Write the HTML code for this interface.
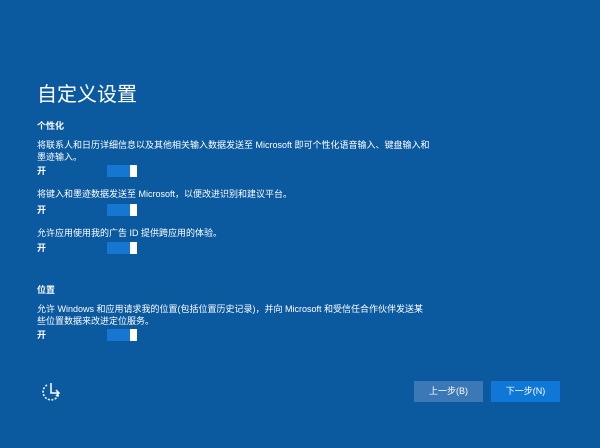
<!DOCTYPE html>
<html><head><meta charset="utf-8"><style>
body{margin:0;width:600px;height:448px;background:#0b5aa0;font-family:"Liberation Sans","Noto Sans CJK SC",sans-serif;color:#fff;position:relative;overflow:hidden}
.t{position:absolute;left:37px;font-size:9px;white-space:nowrap;line-height:12px}
.b{font-weight:bold}
.tg{position:absolute;left:107px;width:30px;height:12px;background:#1677d2}
.tg:after{content:"";position:absolute;right:0;top:0;width:7px;height:12px;background:#fff}
.btn{position:absolute;top:381px;width:69px;height:21px;font-size:9px;text-align:center;line-height:21px}
</style></head><body>
<div class="t" style="top:82px;font-size:20px;line-height:26px">自定义设置</div>
<div class="t b" style="top:120px">个性化</div>
<div class="t" style="top:139px">将联系人和日历详细信息以及其他相关输入数据发送至 Microsoft 即可个性化语音输入、键盘输入和</div>
<div class="t" style="top:151px">墨迹输入。</div>
<div class="t b" style="top:165px">开</div><div class="tg" style="top:165px"></div>
<div class="t" style="top:188px">将键入和墨迹数据发送至 Microsoft，以便改进识别和建议平台。</div>
<div class="t b" style="top:204px">开</div><div class="tg" style="top:204px"></div>
<div class="t" style="top:227px">允许应用使用我的广告 ID 提供跨应用的体验。</div>
<div class="t b" style="top:242px">开</div><div class="tg" style="top:242px"></div>
<div class="t b" style="top:284px">位置</div>
<div class="t" style="top:303px">允许 Windows 和应用请求我的位置(包括位置历史记录)，并向 Microsoft 和受信任合作伙伴发送某</div>
<div class="t" style="top:315px">些位置数据来改进定位服务。</div>
<div class="t b" style="top:329px">开</div><div class="tg" style="top:329px"></div>
<svg style="position:absolute;left:40px;top:380px" width="24" height="24" viewBox="0 0 24 24" fill="none" stroke="#fff" stroke-width="1.5">
<path d="M7 5 A8 8 0 1 0 19 13" stroke-dasharray="2 1.5"/><path d="M11 3 V13 H19"/><path d="M16 10 L19 13 L16 16"/></svg>
<div class="btn" style="left:414px;background:#3b78b5">上一步(B)</div>
<div class="btn" style="left:491px;background:#0f78d6">下一步(N)</div>
</body></html>
